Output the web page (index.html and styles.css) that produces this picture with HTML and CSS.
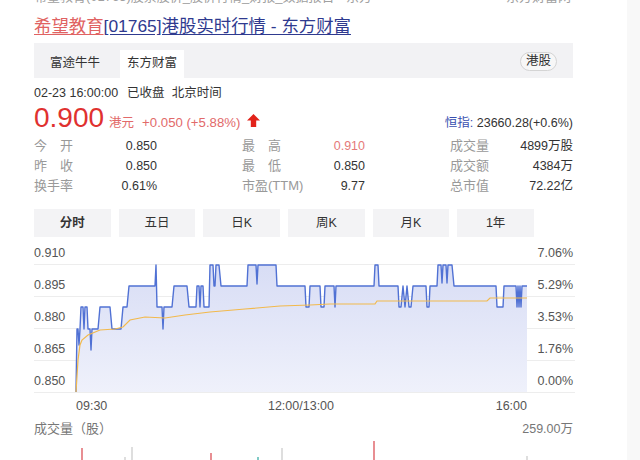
FILE: index.html
```html
<!DOCTYPE html>
<html lang="zh">
<head>
<meta charset="utf-8">
<title>希望教育[01765]港股实时行情</title>
<link rel="stylesheet" href="styles.css">
</head>
<body>
<div class="page">
  <div class="topstrip"><span>希望教育(01765)股票股价_股价行情_财报_数据报告 - 东方</span><span>东方财富网</span></div>
  <h1 class="title"><a class="t-red" href="#">希望教育</a><a class="t-blue" href="#">[01765]港股实时行情 - 东方财富</a></h1>
  <div class="tabbar">
    <div class="tab">富途牛牛</div>
    <div class="tab active">东方财富</div>
    <div class="pill">港股</div>
  </div>
  <div class="daterow"><span>02-23 16:00:00</span><span class="d2">已收盘</span><span class="d3">北京时间</span></div>
  <div class="pricerow">
    <span class="price">0.900</span>
    <span class="unit">港元</span>
    <span class="chg">+0.050 (+5.88%)</span>
    <svg class="arrow" width="13" height="13" viewBox="0 0 13 13"><path d="M6.5 0 L13 6.5 H9.2 V13 H3.8 V6.5 H0 Z" fill="#e2231a"/></svg>
    <span class="hsi"><span class="hsi-l">恒指:</span> 23660.28(+0.6%)</span>
  </div>
  <div class="stats">
    <div class="cell"><span class="lbl j">今 开</span><span class="val">0.850</span></div>
    <div class="cell"><span class="lbl j">最 高</span><span class="val up">0.910</span></div>
    <div class="cell"><span class="lbl">成交量</span><span class="val">4899万股</span></div>
    <div class="cell"><span class="lbl j">昨 收</span><span class="val">0.850</span></div>
    <div class="cell"><span class="lbl j">最 低</span><span class="val">0.850</span></div>
    <div class="cell"><span class="lbl">成交额</span><span class="val">4384万</span></div>
    <div class="cell"><span class="lbl">换手率</span><span class="val">0.61%</span></div>
    <div class="cell"><span class="lbl">市盈(TTM)</span><span class="val">9.77</span></div>
    <div class="cell"><span class="lbl">总市值</span><span class="val">72.22亿</span></div>
  </div>
  <div class="periods">
    <div class="pbtn on">分时</div>
    <div class="pbtn">五日</div>
    <div class="pbtn">日K</div>
    <div class="pbtn">周K</div>
    <div class="pbtn">月K</div>
    <div class="pbtn">1年</div>
  </div>
  <svg class="chart" width="541" height="180" viewBox="34 240 541 180">
    <defs>
      <linearGradient id="fillg" x1="0" y1="265" x2="0" y2="392" gradientUnits="userSpaceOnUse">
        <stop offset="0" stop-color="#d8ddf5"/>
        <stop offset="1" stop-color="#eff1fb"/>
      </linearGradient>
    </defs>
    <g stroke="#ededed" stroke-width="1">
      <line x1="34" y1="264.5" x2="575" y2="264.5"/>
      <line x1="34" y1="296.5" x2="575" y2="296.5"/>
      <line x1="34" y1="328.5" x2="575" y2="328.5"/>
      <line x1="34" y1="360.5" x2="575" y2="360.5"/>
      <line x1="34" y1="392.5" x2="575" y2="392.5"/>
    </g>
    <polygon fill="url(#fillg)" points="76,392 77,329 78,329 79,345 80,329 81,307 83,307 84,329 85,307 87,307 88,329 90,329 91,350 92,329 98,329 100,307 110,307 112,329 121,329 123,307 127,307 129,286 155,286 156,265 157,307 162,307 163,329 164,307 172,307 174,286 187,286 189,307 196,307 197,286 199,286 200,307 201,286 203,286 204,307 209,307 210,265 213,265 214,286 215,286 216,265 219,265 221,286 247,286 248,265 256,265 257,284 258,265 276,265 277,286 305,286 306,307 309,307 310,286 320,286 321,307 324,307 325,286 334,286 335,307 336,286 374,286 375,265 378,265 379,286 398,286 399,307 401,307 403,286 405,307 407,286 409,307 411,307 413,286 426,286 427,307 429,307 430,286 437,286 438,265 441,265 442,283 443,265 446,265 447,283 448,265 452,265 454,286 496,286 497,307 503,307 504,286 516,286 517,307 518,286 519,307 520,286 521,307 522,286 527,286 527,392"/>
    <polyline fill="none" stroke="#5071d4" stroke-width="1.4" stroke-linejoin="round" points="76,392 77,329 78,329 79,345 80,329 81,307 83,307 84,329 85,307 87,307 88,329 90,329 91,350 92,329 98,329 100,307 110,307 112,329 121,329 123,307 127,307 129,286 155,286 156,265 157,307 162,307 163,329 164,307 172,307 174,286 187,286 189,307 196,307 197,286 199,286 200,307 201,286 203,286 204,307 209,307 210,265 213,265 214,286 215,286 216,265 219,265 221,286 247,286 248,265 256,265 257,284 258,265 276,265 277,286 305,286 306,307 309,307 310,286 320,286 321,307 324,307 325,286 334,286 335,307 336,286 374,286 375,265 378,265 379,286 398,286 399,307 401,307 403,286 405,307 407,286 409,307 411,307 413,286 426,286 427,307 429,307 430,286 437,286 438,265 441,265 442,283 443,265 446,265 447,283 448,265 452,265 454,286 496,286 497,307 503,307 504,286 516,286 517,307 518,286 519,307 520,286 521,307 522,286 527,286"/>
    <polyline fill="none" stroke="#f2b94c" stroke-width="1.2" points="76,392 78,360 80,345 82,340 88,335 100,330 115,329 123,327 130,320 145,317 165,318 185,315 210,312 245,309 280,306 310,305 330,304 375,304 377,301 487,301 490,298 527,298"/>
    <g class="ax">
      <text x="34" y="257">0.910</text>
      <text x="34" y="289">0.895</text>
      <text x="34" y="321">0.880</text>
      <text x="34" y="353">0.865</text>
      <text x="34" y="385">0.850</text>
      <text x="573" y="257" text-anchor="end">7.06%</text>
      <text x="573" y="289" text-anchor="end">5.29%</text>
      <text x="573" y="321" text-anchor="end">3.53%</text>
      <text x="573" y="353" text-anchor="end">1.76%</text>
      <text x="573" y="385" text-anchor="end">0.00%</text>
      <text x="76" y="410">09:30</text>
      <text x="301" y="410" text-anchor="middle">12:00/13:00</text>
      <text x="527" y="410" text-anchor="end">16:00</text>
    </g>
  </svg>
  <div class="volhead"><span>成交量（股）</span><span class="vmax">259.00万</span></div>
  <svg class="vol" width="541" height="22" viewBox="34 438 541 22">
    <g stroke-width="1.2">
      <line x1="82" y1="448" x2="82" y2="460" stroke="#d9434a"/>
      <line x1="125" y1="457" x2="125" y2="460" stroke="#c8c8c8"/>
      <line x1="132" y1="447" x2="132" y2="460" stroke="#c8c8c8"/>
      <line x1="211" y1="453" x2="211" y2="460" stroke="#d9434a"/>
      <line x1="258" y1="457" x2="258" y2="460" stroke="#2aa7a0"/>
      <line x1="282" y1="448" x2="282" y2="460" stroke="#c8c8c8"/>
      <line x1="374" y1="441" x2="374" y2="460" stroke="#d9434a"/>
      <line x1="527" y1="456" x2="527" y2="460" stroke="#c8c8c8"/>
    </g>
  </svg>
</div>
</body>
</html>
```
FILE: styles.css
```css
* { box-sizing: border-box; margin: 0; padding: 0; }
html, body { width: 640px; height: 460px; overflow: hidden; }
body {
  background: linear-gradient(to right, #ffffff 0, #ffffff 627px, #f8f8f8 627px);
  font-family: "Liberation Sans", "Noto Sans CJK SC", sans-serif;
  color: #333;
  font-size: 12.5px;
}
.page { padding-left: 34px; width: 573px; }

.topstrip {
  height: 14px; overflow: hidden;
  display: flex; justify-content: space-between;
  color: #a0a0a0; font-size: 13px; line-height: 14px;
}
.topstrip span { margin-top: -10px; padding-right: 2px; }

.title { font-size: 17.4px; font-weight: normal; line-height: 24px; white-space: nowrap; }
.title a { text-decoration: underline; text-underline-offset: 2px; }
.t-red { color: #e06262; }
.t-blue { color: #2f3a8f; }

.tabbar {
  margin-top: 5px; height: 35px; background: #f2f2f4;
  display: flex; align-items: flex-end; padding-left: 9px;
}
.tab { height: 28px; line-height: 26px; padding: 0 7px; font-size: 12.5px; color: #333; margin-right: 13px; }
.tab.active { background: #fff; }
.pill {
  align-self: center; margin-left: auto; margin-right: 16px;
  height: 19px; line-height: 17px; padding: 0 5px;
  border: 1px solid #d4d4d4; border-radius: 10px; background: #f7f7f7;
  font-size: 12.5px; color: #333; margin-top: 2px;
}

.daterow { margin-top: 5px; line-height: 20px; font-size: 12.5px; color: #333; }
.d2 { margin-left: 9px; }
.d3 { margin-left: 7px; }

.pricerow { display: flex; align-items: baseline; height: 30px; line-height: 30px; }
.pricerow > span:not(.price) { line-height: 14px; }
.price { font-size: 28px; color: #e0312f; }
.unit { font-size: 12.5px; color: #e26a6a; margin-left: 5px; }
.chg { font-size: 13.2px; color: #e26a6a; margin-left: 8px; }
.arrow { margin-left: 7px; }
.hsi { margin-left: auto; font-size: 12.5px; color: #333; }
.hsi-l { color: #3a4fb0; }

.stats {
  margin-top: 3px;
  display: grid; grid-template-columns: repeat(3, 123px); column-gap: 85px;
  line-height: 20px;
}
.cell { display: flex; justify-content: space-between; }
.lbl { font-size: 13px; color: #999; }
.j { display: inline-block; width: 39px; text-align: justify; text-align-last: justify; }
.val { font-size: 12.5px; color: #333; }
.val.up { color: #e57a7a; }

.periods {
  margin-top: 13px; width: 500px;
  display: grid; grid-template-columns: repeat(6, 1fr); gap: 8px;
}
.pbtn { height: 28px; line-height: 28px; text-align: center; background: #f3f3f5; font-size: 12.5px; color: #333; }
.pbtn.on { font-weight: bold; }

.chart { display: block; margin-top: 3px; }
.ax text { font-family: "Liberation Sans", sans-serif; font-size: 12.5px; fill: #555; }

.volhead {
  display: flex; justify-content: space-between; width: 539px;
  line-height: 18px; color: #777; font-size: 13px;
}
.vmax { font-size: 12.5px; }
.vol { display: block; }
```
